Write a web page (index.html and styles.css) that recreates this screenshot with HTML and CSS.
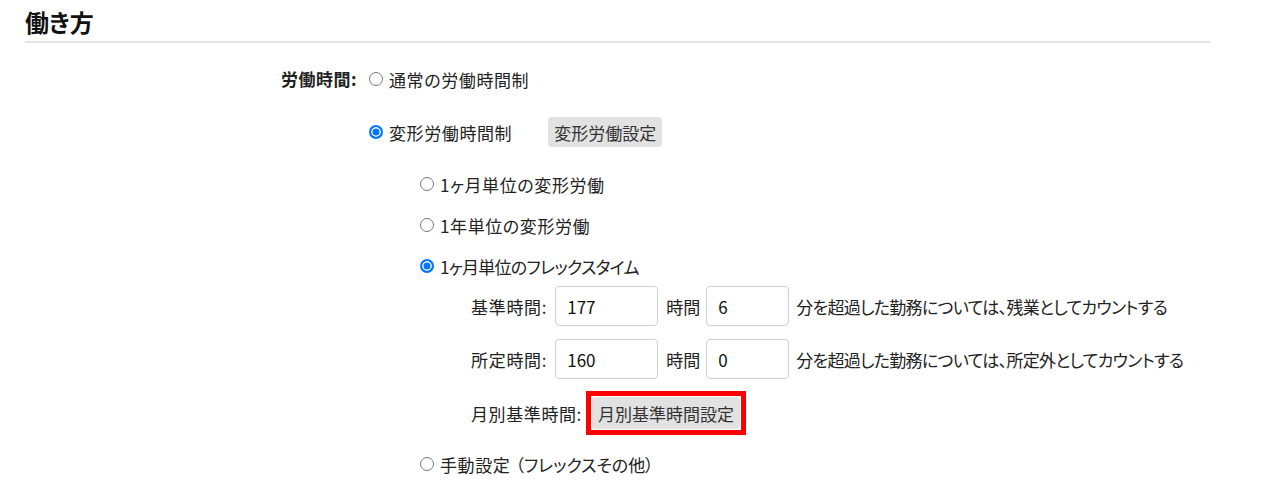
FILE: index.html
```html
<!DOCTYPE html>
<html lang="ja">
<head>
    <meta charset="UTF-8">
    <meta name="viewport" content="width=device-width, initial-scale=1.0">
    <title>働き方</title>
    <link rel="stylesheet" href="styles.css">
</head>

<body>
  <div class="page">
    <h2 class="section_title">働き方</h2>

    <div class="form_row">
      <div class="form_label">労働時間:</div>
      <div class="form_body">
        <label class="option">
          <input type="radio" name="work_time" /><span>通常の労働時間制</span>
        </label>
        <div class="option">
          <label class="option_inline">
            <input type="radio" name="work_time" checked /><span>変形労働時間制</span>
          </label>
          <button class="btn btn_setting">変形労働設定</button>
        </div>

        <div class="sub_options">
          <label class="option">
            <input type="radio" name="variant" /><span>1ヶ月単位の変形労働</span>
          </label>
          <label class="option">
            <input type="radio" name="variant" /><span>1年単位の変形労働</span>
          </label>
          <label class="option">
            <input type="radio" name="variant" checked /><span class="kana_tight">1ヶ月単位のフレックスタイム</span>
          </label>

          <div class="flex_fields">
            <div class="field">
              <span class="field_label">基準時間:</span>
              <input class="num_input num_hours" value="177" />
              <span class="unit">時間</span>
              <input class="num_input num_minutes" value="6" />
              <span class="field_note">分を超過した勤務については、残業としてカウントする</span>
            </div>
            <div class="field">
              <span class="field_label">所定時間:</span>
              <input class="num_input num_hours" value="160" />
              <span class="unit">時間</span>
              <input class="num_input num_minutes" value="0" />
              <span class="field_note">分を超過した勤務については、所定外としてカウントする</span>
            </div>
            <div class="field">
              <span class="field_label field_label_tight">月別基準時間:</span>
              <span class="highlight"><button class="btn btn_monthly">月別基準時間設定</button></span>
            </div>
          </div>

          <label class="option">
            <input type="radio" name="variant" /><span>手動設定<span class="paren">（フレックスその他）</span></span>
          </label>
        </div>
      </div>
    </div>
  </div>
</body>
</html>
```

FILE: styles.css
```css
body { margin: 0; font-family: "Noto Sans CJK JP", "Noto Sans", sans-serif; font-size: 17px; color: #222; font-feature-settings: "palt"; }

.page { padding: 0 0 0 25px; width: 1185px; }

.section_title { margin: 0; padding: 7px 0 4px; font-size: 24px; line-height: 30px; font-weight: bold; color: #111; border-bottom: 2px solid #e2e2e2; }

.form_row { display: flex; margin-top: 21px; }
.form_label { width: 332px; height: 30px; line-height: 30px; text-align: right; font-weight: bold; letter-spacing: 0.5px; }
.form_body { display: flex; flex-direction: column; gap: 23px; }

.option { display: flex; align-items: center; height: 30px; }
.option_inline { display: flex; align-items: center; }
.option input[type="radio"] { appearance: none; flex: none; box-sizing: border-box; width: 14px; height: 14px; margin: 0 6px 0 12px; border: 1px solid #767676; border-radius: 50%; background: #fff; }
.option input[type="radio"]:checked { border: 2px solid #0075ff; background: #0075ff; box-shadow: inset 0 0 0 1.5px #fff; }
.option span { letter-spacing: 0.6px; }
.option .kana_tight { letter-spacing: -0.7px; }
.option .paren { margin-left: 5px; letter-spacing: 0; }

.btn { border: none; border-radius: 4px; background: #e2e2e2; color: #333; font: inherit; cursor: pointer; }
.btn_setting { height: 30px; padding: 0 6px; margin-left: 36px; }

.sub_options { display: flex; flex-direction: column; gap: 11px; padding-left: 51px; margin-top: -1px; }

.flex_fields { display: flex; flex-direction: column; gap: 13px; padding-left: 63px; margin: -6px 0 3px; }
.field { display: flex; align-items: center; height: 40px; }
.field:last-child { height: 44px; margin-top: -1px; }
.field_label { margin-right: 8px; letter-spacing: 0.7px; }
.field_label_tight { margin-right: 4px; letter-spacing: 0.6px; }
.num_input { box-sizing: border-box; height: 40px; border: 1px solid #cfcfcf; border-radius: 4px; padding: 0 11px; font: inherit; color: #111; }
.num_hours { width: 103px; }
.num_minutes { width: 83px; }
.unit { margin: 0 6px 0 8px; }
.field_note { margin-left: 7px; letter-spacing: -0.7px; }

.highlight { display: inline-flex; border: 5px solid #f00; padding: 1px; }
.btn_monthly { height: 32px; padding: 0 6px; }
```
